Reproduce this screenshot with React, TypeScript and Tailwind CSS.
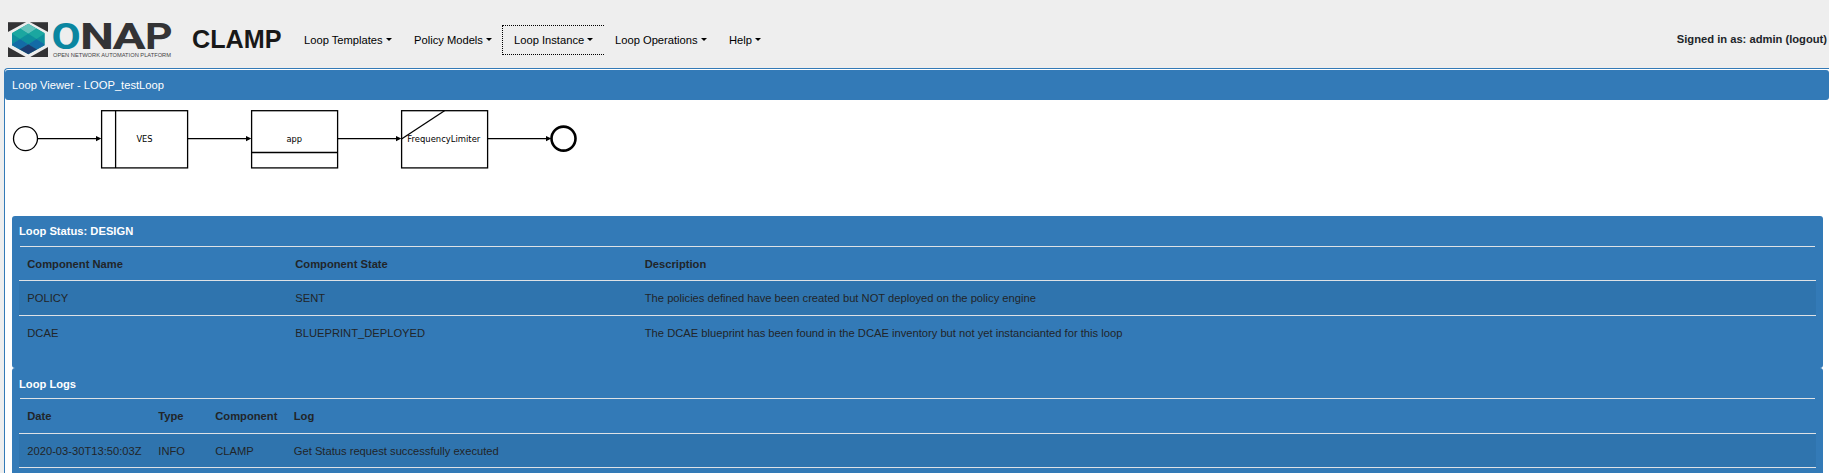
import React from "react";

const menus = [
  { label: "Loop Templates", width: "w-[110px]" },
  { label: "Policy Models", width: "w-[100px]" },
  { label: "Loop Instance", width: "w-[102px] -mr-px", focused: true },
  { label: "Loop Operations", width: "w-[114px]" },
  { label: "Help", width: "w-[54px]" },
];

const letters = [
  { char: "O", x: 43.4, length: 29.2, fill: "#0a86a0" },
  { char: "N", x: 72, length: 34, fill: "#333335" },
  { char: "A", x: 104.6, length: 33.2, fill: "#333335" },
  { char: "P", x: 137, length: 27.6, fill: "#333335" },
];

function Logo() {
  return (
    <svg className="ml-2 mt-[22px] h-[36px] w-[166px] shrink-0 overflow-visible" viewBox="0 0 166 36">
      <rect x="0" y="0.2" width="40" height="34.8" fill="#333335" />
      <polygon points="20,-1 41,10.5 41,24.5 20,36.2 -1,24.5 -1,10.5" fill="#eeeeee" />
      <clipPath id="hex">
        <polygon points="20.3,1.8 36.6,11 36.6,23.2 20.3,32.2 4,23.2 4,11" />
      </clipPath>
      <g clipPath="url(#hex)">
        <rect width="40" height="36" fill="#1da39c" />
        <polygon points="20.3,1.5 28.5,6.5 20.3,11.8 12,6.5" fill="#63c3bb" />
        <polygon points="12,6.5 20.3,11.8 12,17 3.8,11.5" fill="#1ba7a0" />
        <polygon points="28.5,6.5 36.8,11.5 28.5,17 20.3,11.8" fill="#1ba7a0" />
        <polygon points="20.3,11.8 28.5,17 20.3,22.2 12,17" fill="#0e8f9c" />
        <polygon points="3.8,11.5 12,17 3.8,22.2" fill="#0e8f9c" />
        <polygon points="36.8,11.5 28.5,17 36.8,22.2" fill="#0e8f9c" />
        <polygon points="12,17 20.3,22.2 12,27.4 3.8,22.2" fill="#136ba6" />
        <polygon points="28.5,17 36.8,22.2 28.5,27.4 20.3,22.2" fill="#136ba6" />
        <polygon points="3.8,22.2 12,27.4 20.3,33 3.8,33" fill="#12609a" />
        <polygon points="36.8,22.2 28.5,27.4 20.3,33 36.8,33" fill="#12609a" />
        <polygon points="20.3,22.2 29,27.4 20.3,33 11.5,27.4" fill="#1b3c70" />
      </g>
      {letters.map((l) => (
        <text
          key={l.char}
          x={l.x}
          y="27"
          fontFamily="Roboto, 'Liberation Sans', sans-serif"
          fontWeight="700"
          fontSize="36.5"
          textLength={l.length}
          lengthAdjust="spacingAndGlyphs"
          fill={l.fill}
        >
          {l.char}
        </text>
      ))}
      <text x="45" y="34.5" fontFamily="'Liberation Sans', sans-serif" fontSize="5.8" textLength="118" lengthAdjust="spacingAndGlyphs" fill="#444446">OPEN NETWORK AUTOMATION PLATFORM</text>
    </svg>
  );
}

function Caret() {
  return <span className="ml-[3px] mb-px h-0 w-0 border-x-[3.4px] border-t-[3.4px] border-x-transparent border-t-black" />;
}

function Header() {
  return (
    <header className="flex h-[68px] items-start">
      <Logo />
      <h1 className="ml-[18px] mt-[20px] w-[100px] text-[25.2px] leading-[38px] font-bold text-[#181818]">CLAMP</h1>
      <nav className="mt-[25px] flex h-[30px]">
        {menus.map((m) => (
          <button
            key={m.label}
            className={`flex items-center text-black whitespace-nowrap ${m.width} ${
              m.focused ? "border border-r-0 border-dotted border-black pl-[11px]" : "pl-[12px]"
            }`}
          >
            {m.label}
            <Caret />
          </button>
        ))}
      </nav>
      <div className="mt-[31px] ml-auto mr-[2px] leading-[17px] font-bold">Signed in as: admin (logout)</div>
    </header>
  );
}

function Arrow({ x1, x2 }: { x1: number; x2: number }) {
  return (
    <g>
      <line x1={x1} y1="38.6" x2={x2 - 3} y2="38.6" strokeWidth="1.3" />
      <polygon points={`${x2 - 5},35.9 ${x2 + 0.3},38.6 ${x2 - 5},41.3`} fill="#000" stroke="none" />
    </g>
  );
}

function Diagram() {
  return (
    <svg className="block h-[116px] w-[600px]" viewBox="5 0 600 116" fill="none" stroke="#000" strokeWidth="1.3">
      <circle cx="25.5" cy="38.6" r="12" />
      <Arrow x1={38} x2={101} />
      <rect x="101.6" y="10.7" width="86" height="57.2" />
      <line x1="115.6" y1="10.7" x2="115.6" y2="68" />
      <Arrow x1={188} x2={251} />
      <rect x="251.6" y="10.7" width="86" height="57.2" />
      <line x1="251.5" y1="52.5" x2="337.5" y2="52.5" />
      <Arrow x1={338} x2={401} />
      <rect x="401.6" y="10.7" width="86" height="57.2" />
      <line x1="401.5" y1="39" x2="444.5" y2="10.7" />
      <Arrow x1={488} x2={551} />
      <circle cx="563.5" cy="38.6" r="12" strokeWidth="2.6" />
      <g fill="#000" stroke="none" textAnchor="middle" fontSize="8.3" fontFamily="'DejaVu Sans', sans-serif">
        <text x="144.5" y="42">VES</text>
        <text x="294.2" y="42">app</text>
        <text x="443.8" y="42" textLength="73" lengthAdjust="spacingAndGlyphs">FrequencyLimiter</text>
      </g>
    </svg>
  );
}

interface PanelProps {
  title: string;
  widths: string[];
  columns: string[];
  rows: string[][];
  titlePadding: string;
  headHeight: string;
  headPadding: string;
  rowHeight: string;
  cellPadding: string;
}

function Panel({ title, widths, columns, rows, titlePadding, headHeight, headPadding, rowHeight, cellPadding }: PanelProps) {
  return (
    <section className="h-[152px] rounded-[3px] bg-[#337ab7] px-[7px]">
      <h2 className={`h-[30px] leading-[17px] font-bold text-white ${titlePadding}`}>{title}</h2>
      <div className="mx-px h-px bg-[#dee2e6]" />
      <table className="w-full table-fixed border-separate border-spacing-0 text-left text-[#212529]">
        <colgroup>
          {widths.map((w, i) => (
            <col key={i} className={w} />
          ))}
        </colgroup>
        <thead>
          <tr className={headHeight}>
            {columns.map((c) => (
              <th key={c} className={`pb-0 pl-[8.3px] align-middle font-bold last:pl-[7.8px] ${headPadding}`}>{c}</th>
            ))}
          </tr>
        </thead>
        <tbody>
          {rows.map((row, r) => (
            <tr key={r} className={`odd:bg-[#2f74ae] ${rowHeight}`}>
              {row.map((cell, i) => (
                <td key={i} className={`border-t border-[#dee2e6] pb-0 pl-[8.3px] align-middle whitespace-nowrap last:pl-[7.8px] ${cellPadding}`}>{cell}</td>
              ))}
            </tr>
          ))}
        </tbody>
      </table>
    </section>
  );
}

export default function App() {
  return (
    <div className="h-[473px] w-full overflow-hidden bg-[#eeeeee] font-['Liberation_Sans',Arial,sans-serif] text-[11.18px] text-[#212529]">
      <Header />
      <main className="ml-[4px] h-[500px] rounded-tl-[4px] border-t border-l border-[#337ab7] bg-white pt-px">
        <div className="h-[30px] rounded-[3px] bg-[#337ab7] pt-[7px] pl-[7px] leading-[17px] text-white">
          Loop Viewer - LOOP_testLoop
        </div>
        <Diagram />
        <div className="mr-[6px] ml-[7px]">
          <Panel
            headHeight="h-[33px]"
            headPadding="pt-[2px]"
            rowHeight="h-[35px]"
            cellPadding="pt-0"
            titlePadding="pt-[7px]"
            title="Loop Status: DESIGN"
            widths={["w-[268px]", "w-[350px]", ""]}
            columns={["Component Name", "Component State", "Description"]}
            rows={[
              ["POLICY", "SENT", "The policies defined have been created but NOT deployed on the policy engine"],
              ["DCAE", "BLUEPRINT_DEPLOYED", "The DCAE blueprint has been found in the DCAE inventory but not yet instancianted for this loop"],
            ]}
          />
          <Panel
            headHeight="h-[34px]"
            headPadding="pt-0"
            rowHeight="h-[34px]"
            cellPadding="pt-[2px]"
            titlePadding="pt-[8px]"
            title="Loop Logs"
            widths={["w-[131px]", "w-[57px]", "w-[79px]", ""]}
            columns={["Date", "Type", "Component", "Log"]}
            rows={[
              ["2020-03-30T13:50:03Z", "INFO", "CLAMP", "Get Status request successfully executed"],
              ["", "", "", ""],
            ]}
          />
        </div>
      </main>
    </div>
  );
}
